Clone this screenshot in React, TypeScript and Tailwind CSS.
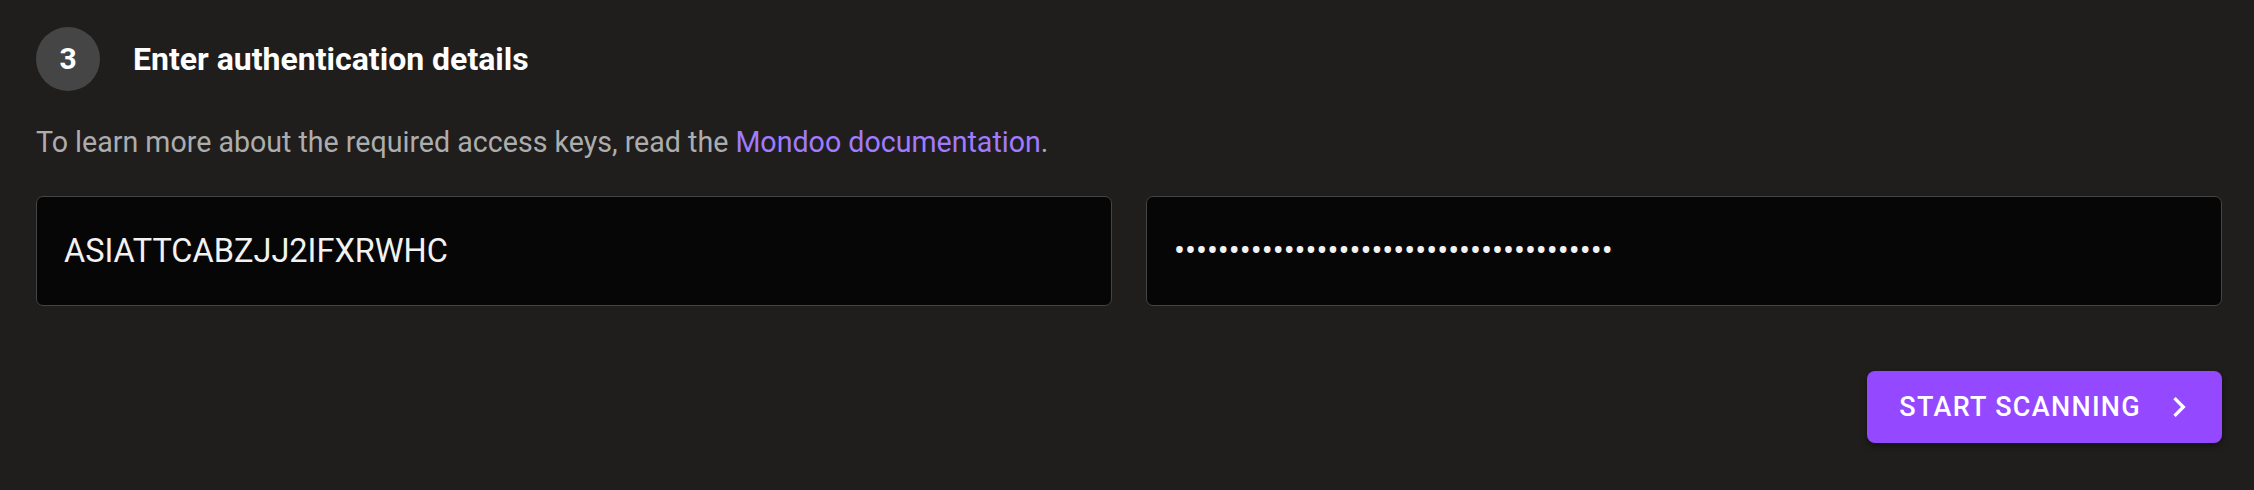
import React from "react";

const font = { fontFamily: "Roboto, 'Liberation Sans', sans-serif" };

function ChevronRight({ className }: { className?: string }) {
  return (
    <svg viewBox="0 0 24 24" className={className} fill="currentColor">
      <path d="M10 6 8.59 7.41 13.17 12l-4.58 4.59L10 18l6-6z" />
    </svg>
  );
}

export default function App() {
  return (
    <div
      style={font}
      className="w-full h-[490px] bg-[#1f1e1d] pl-[36px] pr-[32px] pt-[27px] text-white"
    >
      {/* step header */}
      <div className="flex items-center gap-[33px]">
        <div className="w-[64px] h-[64px] rounded-full bg-[#454545] flex items-center justify-center text-[30px] font-bold leading-none">
          3
        </div>
        <h2 className="text-[32px] font-bold leading-none">Enter authentication details</h2>
      </div>

      <p className="mt-[30px] text-[28.6px] leading-[42px] text-[#adadad]">
        To learn more about the required access keys, read the{" "}
        <a href="#" className="text-[#a17bff]">
          Mondoo documentation
        </a>
        .
      </p>

      {/* keys */}
      <div className="mt-[33px] grid grid-cols-2 gap-[34px]">
        <input
          type="text"
          defaultValue="ASIATTCABZJJ2IFXRWHC"
          style={font}
          className="h-[110px] w-full rounded-[7px] border-[1.5px] border-[#444444] bg-[#060606] pl-[27px] text-[32.5px] text-[#f2f2f2] outline-none"
        />
        <input
          type="password"
          defaultValue="wJalrXUtnFEMIK7MDENGbPxRfiCYEXAMPLEKEY01"
          style={font}
          className="h-[110px] w-full rounded-[7px] border-[1.5px] border-[#444444] bg-[#060606] pl-[27px] text-[32.5px] text-[#f2f2f2] outline-none"
        />
      </div>

      <div className="mt-[65px] flex justify-end">
        <button
          type="button"
          className="h-[72px] flex items-center gap-[18px] pl-[32px] pr-[23px] rounded-[8px] bg-[#9448ff] text-white text-[27px] font-medium uppercase tracking-[1.3px] shadow-[0_3px_6px_rgba(0,0,0,0.4)]"
        >
          Start scanning
          <ChevronRight className="w-[40px] h-[40px]" />
        </button>
      </div>
    </div>
  );
}
